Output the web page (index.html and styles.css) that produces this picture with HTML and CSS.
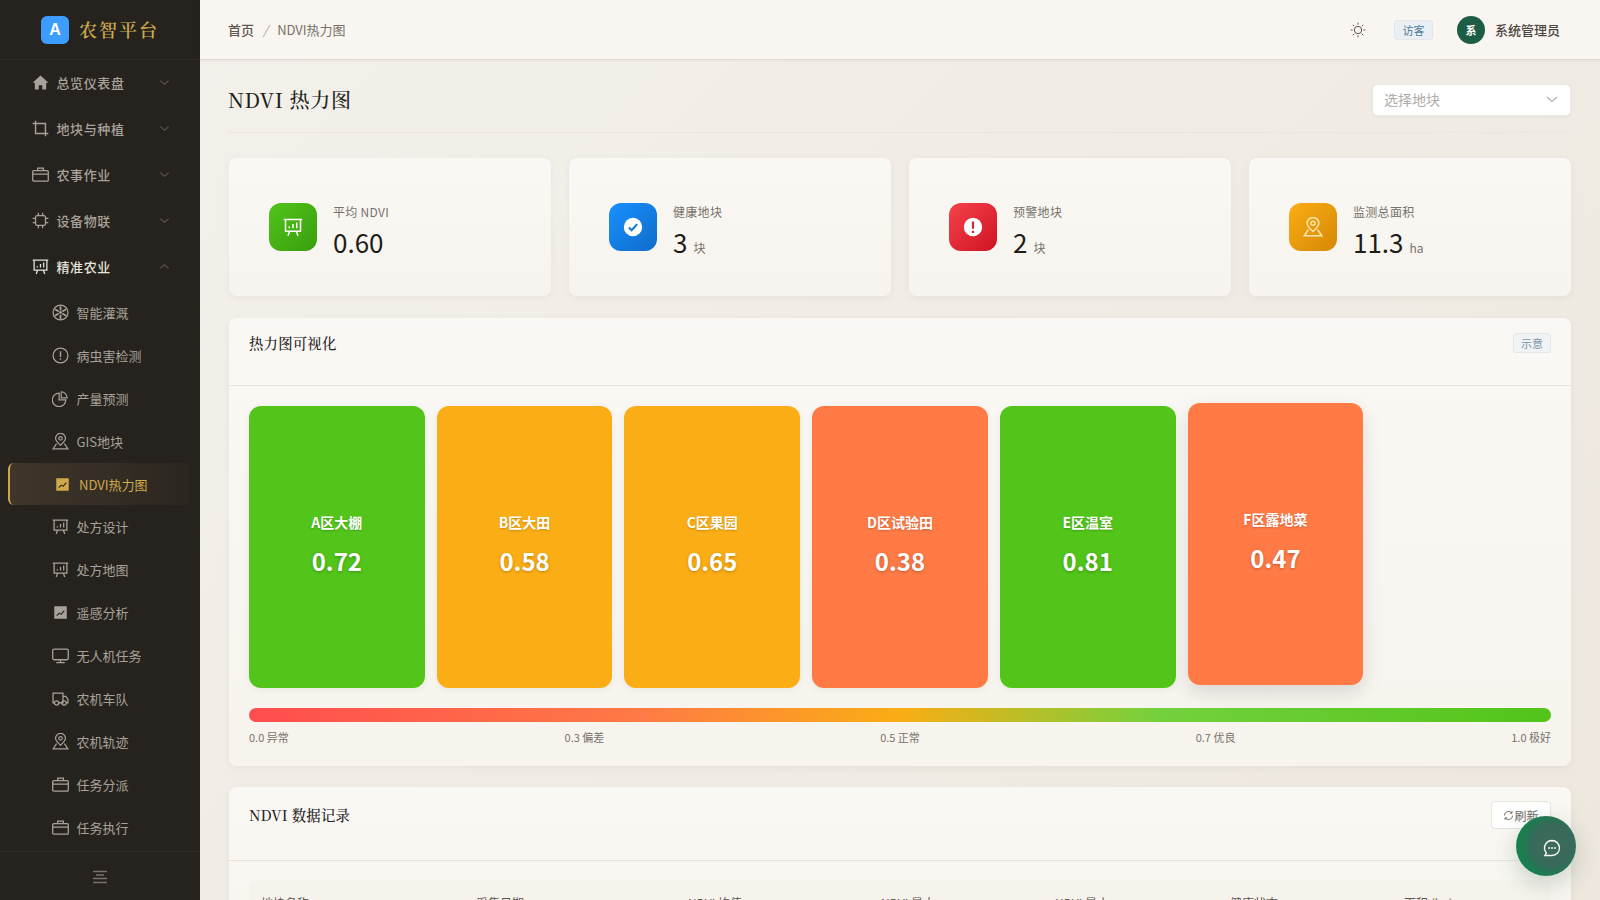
FILE: index.html
```html
<!DOCTYPE html>
<html>
<head>
  <title>NDVI热力图</title>
  <link rel="stylesheet" href="styles.css">
</head>
<body>
  <svg class="sprite" width="0" height="0">
    <defs>
      <symbol id="i-board" viewBox="0 0 24 24"><path d="M1 3h22M3 3v14h18V3M8 17l-2 5.500M16 17l2 5.500M7.500 13.500v-2M12 13.500v-5M16.500 13.500v-7" fill="none" stroke="currentColor" stroke-width="1.800"/></symbol>
      <symbol id="i-pin" viewBox="0 0 24 24"><path d="M12 17.500c-4-3.800-7-6.800-7-10a7 7 0 0 1 14 0c0 3.200-3 6.200-7 10zM6.500 15L1.500 22.500h21L17.500 15" fill="none" stroke="currentColor" stroke-width="1.700"/><circle cx="12" cy="7.500" r="2.500" fill="none" stroke="currentColor" stroke-width="1.700"/></symbol>
      <symbol id="i-case" viewBox="0 0 24 24"><path d="M2.500 6.500h19a1.500 1.500 0 0 1 1.500 1.500v12a1.500 1.500 0 0 1-1.500 1.500h-19A1.500 1.500 0 0 1 1 20V8a1.500 1.500 0 0 1 1.500-1.500zM8 6.500V3h8v3.500M1 11.500h22" fill="none" stroke="currentColor" stroke-width="1.800"/></symbol>
      <symbol id="i-trend" viewBox="0 0 24 24"><path d="M2 2h20v20H2z" fill="currentColor"/><path d="M6 17l4-4 3 2 5-6" fill="none" stroke="#26221e" stroke-width="1.800"/></symbol>
    </defs>
  </svg>

  <aside class="sidebar">
    <div class="logo">
      <span class="logo-mark">A</span>
      <span class="logo-text">农智平台</span>
    </div>
    <nav class="menu">
      <a class="menu-item"><svg class="ic" viewBox="0 0 24 24"><path d="M12 2L1.500 11.500 3 13l1-.9V22h5.500v-6h5v6H20v-9.900l1 .9 1.500-1.500z" fill="currentColor"/></svg>总览仪表盘<svg class="arrow" viewBox="0 0 12 12"><path d="M1.500 4l4.500 4 4.500-4" /></svg></a>
      <a class="menu-item"><svg class="ic" viewBox="0 0 24 24"><path d="M5 1v18h18M1 5h18v18" fill="none" stroke="currentColor" stroke-width="2"/></svg>地块与种植<svg class="arrow" viewBox="0 0 12 12"><path d="M1.500 4l4.500 4 4.500-4" /></svg></a>
      <a class="menu-item"><svg class="ic"><use href="#i-case"/></svg>农事作业<svg class="arrow" viewBox="0 0 12 12"><path d="M1.500 4l4.500 4 4.500-4" /></svg></a>
      <a class="menu-item"><svg class="ic" viewBox="0 0 24 24"><rect x="5" y="5" width="14" height="14" rx="2.500" fill="none" stroke="currentColor" stroke-width="1.800"/><path d="M9 1v4M15 1v4M9 19v4M15 19v4M1 9h4M1 15h4M19 9h4M19 15h4" stroke="currentColor" stroke-width="1.800"/></svg>设备物联<svg class="arrow" viewBox="0 0 12 12"><path d="M1.500 4l4.500 4 4.500-4" /></svg></a>
      <a class="menu-item open"><svg class="ic"><use href="#i-board"/></svg>精准农业<svg class="arrow" viewBox="0 0 12 12"><path d="M1.500 8l4.500-4 4.500 4" /></svg></a>

      <a class="sub-item first"><svg class="ic" viewBox="0 0 24 24"><circle cx="12" cy="12" r="10.500" fill="none" stroke="currentColor" stroke-width="1.700"/><circle cx="12" cy="12" r="2" fill="currentColor"/><path d="M12 3v6M12 15v6M4.200 7.500l5.200 3M14.600 13.500l5.200 3M4.200 16.500l5.200-3M14.600 10.500l5.200-3" stroke="currentColor" stroke-width="2.600"/></svg>智能灌溉</a>
      <a class="sub-item"><svg class="ic" viewBox="0 0 24 24"><circle cx="12" cy="12" r="10.500" fill="none" stroke="currentColor" stroke-width="1.700"/><path d="M12 6v8M12 16v2" stroke="currentColor" stroke-width="2"/></svg>病虫害检测</a>
      <a class="sub-item"><svg class="ic" viewBox="0 0 24 24"><path d="M13 2.500a9 9 0 0 1 8.500 8.500H13zM10 4.500a9.500 9.500 0 1 0 9.500 9.500H10z" fill="none" stroke="currentColor" stroke-width="1.700"/></svg>产量预测</a>
      <a class="sub-item"><svg class="ic"><use href="#i-pin"/></svg>GIS地块</a>
      <a class="sub-item active"><svg class="ic small"><use href="#i-trend"/></svg>NDVI热力图</a>
      <a class="sub-item"><svg class="ic"><use href="#i-board"/></svg>处方设计</a>
      <a class="sub-item"><svg class="ic"><use href="#i-board"/></svg>处方地图</a>
      <a class="sub-item"><svg class="ic small plain"><use href="#i-trend"/></svg>遥感分析</a>
      <a class="sub-item"><svg class="ic" viewBox="0 0 24 24"><rect x="1" y="3" width="22" height="15" rx="2" fill="none" stroke="currentColor" stroke-width="1.800"/><path d="M12 18v3.500M6 22h12" stroke="currentColor" stroke-width="1.800"/></svg>无人机任务</a>
      <a class="sub-item"><svg class="ic" viewBox="0 0 24 24"><path d="M3.500 18H1.500V4.500h14V18H9.500M15.500 9h4l3 4v5H20" fill="none" stroke="currentColor" stroke-width="1.800"/><circle cx="6.500" cy="18.500" r="3" fill="none" stroke="currentColor" stroke-width="1.800"/><circle cx="17" cy="18.500" r="3" fill="none" stroke="currentColor" stroke-width="1.800"/></svg>农机车队</a>
      <a class="sub-item"><svg class="ic"><use href="#i-pin"/></svg>农机轨迹</a>
      <a class="sub-item"><svg class="ic"><use href="#i-case"/></svg>任务分派</a>
      <a class="sub-item"><svg class="ic"><use href="#i-case"/></svg>任务执行</a>
    </nav>
    <div class="collapse">
      <svg width="16" height="14" viewBox="0 0 16 14"><path d="M1 1.500h14M4 5h8M1 8.500h14M1 12.500h14" stroke="currentColor" stroke-width="1.400"/></svg>
    </div>
  </aside>

  <div class="main">
    <header class="topbar">
      <div class="crumbs"><b>首页</b><i>/</i><span>NDVI热力图</span></div>
      <div class="top-right">
        <svg class="sun" viewBox="0 0 24 24"><circle cx="12" cy="12" r="5.500" fill="none" stroke="currentColor" stroke-width="1.500"/><path d="M12 1v3M12 20v3M1 12h3M20 12h3M4.200 4.200l2.100 2.100M17.700 17.700l2.100 2.100M4.200 19.800l2.100-2.100M17.700 6.300l2.100-2.100" stroke="currentColor" stroke-width="1.500"/></svg>
        <span class="tag guest">访客</span>
        <span class="avatar">系</span>
        <span class="user">系统管理员</span>
      </div>
    </header>

    <main class="content">
      <div class="page-head">
        <h1>NDVI 热力图</h1>
        <div class="select">选择地块<svg class="arrow" viewBox="0 0 12 12"><path d="M1 4l5 4.500L11 4" /></svg></div>
      </div>

      <section class="stats">
        <div class="stat">
          <span class="stat-icon green"><svg viewBox="0 0 24 24"><use href="#i-board"/></svg></span>
          <div class="stat-text"><p class="stat-label">平均 NDVI</p><p class="stat-value">0.60</p></div>
        </div>
        <div class="stat">
          <span class="stat-icon blue"><svg viewBox="0 0 24 24"><circle cx="12" cy="12" r="10" fill="#fff"/><path d="M7.500 12.500l3 3 6-6.500" fill="none" stroke="#1677d8" stroke-width="2.200"/></svg></span>
          <div class="stat-text"><p class="stat-label">健康地块</p><p class="stat-value">3<small>块</small></p></div>
        </div>
        <div class="stat">
          <span class="stat-icon red"><svg viewBox="0 0 24 24"><circle cx="12" cy="12" r="10" fill="#fff"/><path d="M12 6v8M12 16v2.500" stroke="#d9232f" stroke-width="2.400"/></svg></span>
          <div class="stat-text"><p class="stat-label">预警地块</p><p class="stat-value">2<small>块</small></p></div>
        </div>
        <div class="stat">
          <span class="stat-icon amber"><svg viewBox="0 0 24 24"><use href="#i-pin"/></svg></span>
          <div class="stat-text"><p class="stat-label">监测总面积</p><p class="stat-value">11.3<small>ha</small></p></div>
        </div>
      </section>

      <section class="panel heat">
        <div class="panel-head">
          <h2>热力图可视化</h2>
          <span class="tag">示意</span>
        </div>
        <div class="panel-body">
          <div class="tiles">
            <div class="tile good"><span>A区大棚</span><strong>0.72</strong></div>
            <div class="tile mid"><span>B区大田</span><strong>0.58</strong></div>
            <div class="tile mid"><span>C区果园</span><strong>0.65</strong></div>
            <div class="tile low"><span>D区试验田</span><strong>0.38</strong></div>
            <div class="tile good"><span>E区温室</span><strong>0.81</strong></div>
            <div class="tile low raised"><span>F区露地菜</span><strong>0.47</strong></div>
          </div>
          <div class="legend-bar"></div>
          <div class="legend">
            <span>0.0 异常</span><span>0.3 偏差</span><span>0.5 正常</span><span>0.7 优良</span><span>1.0 极好</span>
          </div>
        </div>
      </section>

      <section class="panel records">
        <div class="panel-head">
          <h2>NDVI 数据记录</h2>
          <button class="refresh"><svg viewBox="0 0 12 12"><path d="M10.500 6A4.500 4.500 0 0 1 2.400 8.700M1.500 6a4.500 4.500 0 0 1 8.100-2.700M9.800 1.200v2.300H7.500M2.200 10.800V8.500h2.300" fill="none" stroke="currentColor" stroke-width="1"/></svg>刷新</button>
        </div>
        <div class="panel-body">
          <div class="table-head">
            <span>地块名称</span><span>采集日期</span><span>NDVI 均值</span><span>NDVI 最大</span><span>NDVI 最小</span><span>健康状态</span><span>面积 (ha)</span>
          </div>
        </div>
      </section>
    </main>
  </div>

  <button class="fab"><svg viewBox="0 0 24 24"><path d="M12 3a9 9 0 0 1 0 18H3.500l1.700-3.200A9 9 0 0 1 12 3z" fill="none" stroke="currentColor" stroke-width="1.600"/><circle cx="8.500" cy="12" r="1.100" fill="currentColor"/><circle cx="12" cy="12" r="1.100" fill="currentColor"/><circle cx="15.500" cy="12" r="1.100" fill="currentColor"/></svg></button>
</body>
</html>
```

FILE: styles.css
```css
* {
  box-sizing: border-box;
}
html, body {
  height: 100%;
}
body {
  margin: 0;
  display: flex;
  height: 900px;
  overflow: hidden;
  background: linear-gradient(135deg, #f4f1ec, #ede7de);
  color: #26221e;
  font-family: "Noto Sans CJK SC", "Noto Sans", sans-serif;
  font-size: 14px;
}
p, h1, h2 {
  margin: 0;
  font-weight: 400;
}
.sprite {
  position: absolute;
}

/* sidebar */
.sidebar {
  width: 200px;
  flex: none;
  height: 900px;
  display: flex;
  flex-direction: column;
  background: #26221e;
  color: #a8a29a;
}
.logo {
  height: 60px;
  flex: none;
  display: flex;
  align-items: center;
  justify-content: center;
  gap: 10px;
  border-bottom: 1px solid #2f2b26;
}
.logo-mark {
  width: 28px;
  height: 28px;
  border-radius: 6px;
  background: #3c9cff;
  color: #fff;
  font: 700 16px "Liberation Sans", sans-serif;
  display: flex;
  align-items: center;
  justify-content: center;
}
.logo-text {
  font-family: "Noto Serif CJK SC", "Liberation Serif", serif;
  font-size: 18px;
  font-weight: 600;
  letter-spacing: 2px;
  padding-bottom: 2px;
  color: #c9a84f;
}
.menu {
  flex: 1;
  overflow: hidden;
  display: flex;
  flex-direction: column;
}
.menu-item {
  height: 46px;
  flex: none;
  display: flex;
  align-items: center;
  padding: 0 30px 0 32px;
  gap: 7.500px;
  font-size: 13px;
  font-weight: 500;
  letter-spacing: 0.6px;
  color: #a8a29a;
}
.menu-item:first-child {
  margin-top: -1px;
}
.menu-item.open {
  color: #e6e2dc;
}
.ic {
  width: 17px;
  height: 17px;
  flex: none;
}
.arrow {
  width: 11px;
  height: 11px;
  margin-left: auto;
  fill: none;
  stroke: #5f5a53;
  stroke-width: 1.200;
}
.sub-item {
  height: 43px;
  flex: none;
  display: flex;
  align-items: center;
  padding-left: 52px;
  gap: 7.500px;
  font-size: 13px;
  color: #a8a29a;
}
.sub-item.first {
  margin-top: 2px;
}
.sub-item.active {
  margin: 0 10px 0 8px;
  padding-left: 45px;
  height: 42px;
  gap: 9px;
  border-left: 2px solid #c9a84f;
  border-radius: 6px;
  background: linear-gradient(90deg, #40362a, #2b2620);
  color: #cfa94c;
}
.ic.small {
  width: 15px;
  height: 15px;
}
.ic.plain {
  margin: 0 1px;
}
.collapse {
  height: 49px;
  flex: none;
  padding-top: 1px;
  border-top: 1px solid #302c27;
  display: flex;
  align-items: center;
  justify-content: center;
  color: #77726b;
}

/* top bar */
.main {
  flex: 1;
  min-width: 0;
}
.topbar {
  height: 60px;
  display: flex;
  align-items: center;
  justify-content: space-between;
  padding: 0 40px 0 28px;
  background: #f9f6f1;
  border-bottom: 1px solid #dfdbd4;
  box-shadow: 0 1px 4px rgba(0,0,0,0.04);
}
.crumbs {
  display: flex;
  align-items: center;
  font-size: 13px;
  color: #77716a;
}
.crumbs b {
  font-weight: 500;
  color: #5d5750;
}
.crumbs i {
  margin: 0 9px;
  color: #a8a39b;
}
.top-right {
  display: flex;
  align-items: center;
}
.sun {
  width: 16px;
  height: 16px;
  margin-right: 28px;
  color: #5d5750;
}
.tag {
  height: 20px;
  padding: 0 7px;
  display: inline-flex;
  align-items: center;
  font-size: 11px;
  color: #7b95a8;
  background: #f0f2f3;
  border: 1px solid #e4e6e8;
  border-radius: 3px;
}
.tag.guest {
  padding: 0 7.500px;
  color: #4f7d99;
  background: #e9eff3;
  margin-right: 24px;
}
.avatar {
  width: 28px;
  height: 28px;
  border-radius: 50%;
  background: #1d5c45;
  color: #fff;
  font-size: 11px;
  font-weight: 700;
  display: flex;
  align-items: center;
  justify-content: center;
  margin-right: 10px;
}
.user {
  font-size: 13px;
  font-weight: 500;
  color: #4a453f;
}

/* content */
.content {
  padding: 24px 29px 0 29px;
}
.page-head {
  height: 49px;
  display: flex;
  align-items: flex-start;
  justify-content: space-between;
  border-bottom: 1px solid #eae6df;
}
h1 {
  font-family: "Noto Serif CJK SC", "Liberation Serif", serif;
  font-size: 20px;
  font-weight: 500;
  letter-spacing: 0.7px;
  line-height: 32px;
  margin-left: -1px;
  color: #221f1b;
}
.select {
  width: 199px;
  height: 32px;
  display: flex;
  align-items: center;
  padding: 0 12px 2px 11px;
  background: #fff;
  border: 1px solid #ece8e2;
  border-radius: 5px;
  box-shadow: 0 1px 3px rgba(60,50,30,0.05);
  color: #b0aca6;
  font-size: 14px;
}
.select .arrow {
  width: 12px;
  height: 12px;
  stroke: #b5b0a8;
}
.stats {
  display: grid;
  grid-template-columns: repeat(4, 1fr);
  gap: 18px;
  margin-top: 25px;
}
.stat {
  height: 138px;
  display: flex;
  align-items: center;
  gap: 16px;
  padding: 0 40px;
  background: linear-gradient(180deg, #faf8f4, #f7f4ef);
  border-radius: 8px;
  box-shadow: 0 2px 8px rgba(60,50,30,0.05);
}
.stat-icon {
  width: 48px;
  height: 48px;
  flex: none;
  border-radius: 12px;
  display: flex;
  align-items: center;
  justify-content: center;
  color: #fff;
}
.stat-icon svg {
  width: 22px;
  height: 22px;
}
.stat-icon.green svg,
.stat-icon.amber svg {
  width: 20px;
  height: 20px;
}
.stat-icon.green { background: linear-gradient(135deg, #52c41a, #389e0d); }
.stat-icon.blue { background: linear-gradient(135deg, #1890ff, #0f6cc9); }
.stat-icon.red { background: linear-gradient(135deg, #f5434b, #cf1322); }
.stat-icon.amber { background: linear-gradient(135deg, #faad14, #d48806); }
.stat-icon.amber svg { color: #ffe8b0; }
.stat-text {
  padding-top: 7px;
}
.stat-label {
  font-size: 12px;
  letter-spacing: 0.3px;
  line-height: 18px;
  color: #77716a;
}
.stat-value {
  font-size: 26px;
  line-height: 32px;
  height: 32px;
  margin-top: 5px;
  color: #1f1c18;
}
.stat-value small {
  font-size: 12px;
  line-height: 1;
  margin-left: 6px;
  color: #77716a;
}

/* panels */
.panel {
  margin-top: 22px;
  background: linear-gradient(180deg, #faf8f4, #f7f4ee);
  border-radius: 8px;
  box-shadow: 0 2px 8px rgba(60,50,30,0.05);
}
.panel-head {
  display: flex;
  align-items: flex-start;
  justify-content: space-between;
  padding: 15px 20px 0;
  height: 68px;
  border-bottom: 1px solid #e9e5de;
}
h2 {
  font-family: "Noto Serif CJK SC", "Liberation Serif", serif;
  font-size: 14.400px;
  font-weight: 500;
  line-height: 20px;
  letter-spacing: 0.2px;
  color: #26221e;
}
.panel-body {
  padding: 20px;
}
.tiles {
  display: grid;
  grid-template-columns: repeat(7, 1fr);
  gap: 12px;
}
.tile {
  height: 282px;
  border-radius: 12px;
  padding-bottom: 3px;
  display: flex;
  flex-direction: column;
  align-items: center;
  justify-content: center;
  gap: 11px;
  color: #fff;
  box-shadow: 0 2px 8px rgba(0,0,0,0.06);
}
.tile span {
  font-size: 14px;
  line-height: 20px;
  font-weight: 700;
  text-shadow: 0 1px 2px rgba(0,0,0,0.2);
}
.tile strong {
  font-size: 24px;
  line-height: 36px;
  text-shadow: 0 1px 3px rgba(0,0,0,0.25);
}
.tile.good { background: #52c41a; }
.tile.mid { background: #faad14; }
.tile.low { background: #ff7a45; }
.tile.raised {
  transform: translateY(-3px);
  box-shadow: 0 8px 20px rgba(0,0,0,0.12);
}
.legend-bar {
  height: 14px;
  margin-top: 20px;
  border-radius: 7px;
  background: linear-gradient(90deg, #ff4d4f, #ff7a45 30%, #faad14 50%, #73d13d 70%, #52c41a);
}
.legend {
  display: flex;
  justify-content: space-between;
  margin-top: 6px;
  font-size: 11px;
  line-height: 18px;
  color: #77716a;
}
.heat {
  height: 448px;
}
.records {
  margin-top: 21px;
  height: 200px;
}
.records .panel-head {
  height: 74px;
  padding-top: 14px;
}
.records h2 {
  line-height: 28px;
}
.refresh {
  height: 28px;
  padding: 0 11.500px;
  display: flex;
  align-items: center;
  background: #fff;
  border: 1px solid #e9e5de;
  border-radius: 4px;
  color: #6d675f;
  font-family: inherit;
  font-size: 12px;
}
.refresh svg {
  width: 11px;
  height: 11px;
}
.table-head {
  display: grid;
  grid-template-columns: 215px 212px 193px 174px 175px 174px 1fr;
  margin: -1px 0 0;
  padding: 14px 12px 8px;
  background: #f6f3ed;
  border-radius: 6px 6px 0 0;
  font-size: 12px;
  color: #5d5750;
}
.fab {
  position: fixed;
  left: 1516px;
  top: 816px;
  width: 60px;
  height: 60px;
  padding: 0;
  border: none;
  border-radius: 50%;
  color: #fff;
  background: radial-gradient(circle 34px at 62% 48%, #3d6b5b 0, #38695a 60%, #17804f 100%);
  box-shadow: 0 8px 24px rgba(30,80,60,0.22);
  display: flex;
  align-items: center;
  justify-content: center;
}
.fab svg {
  width: 20px;
  height: 20px;
  margin: 4px 0 0 12px;
}
```
